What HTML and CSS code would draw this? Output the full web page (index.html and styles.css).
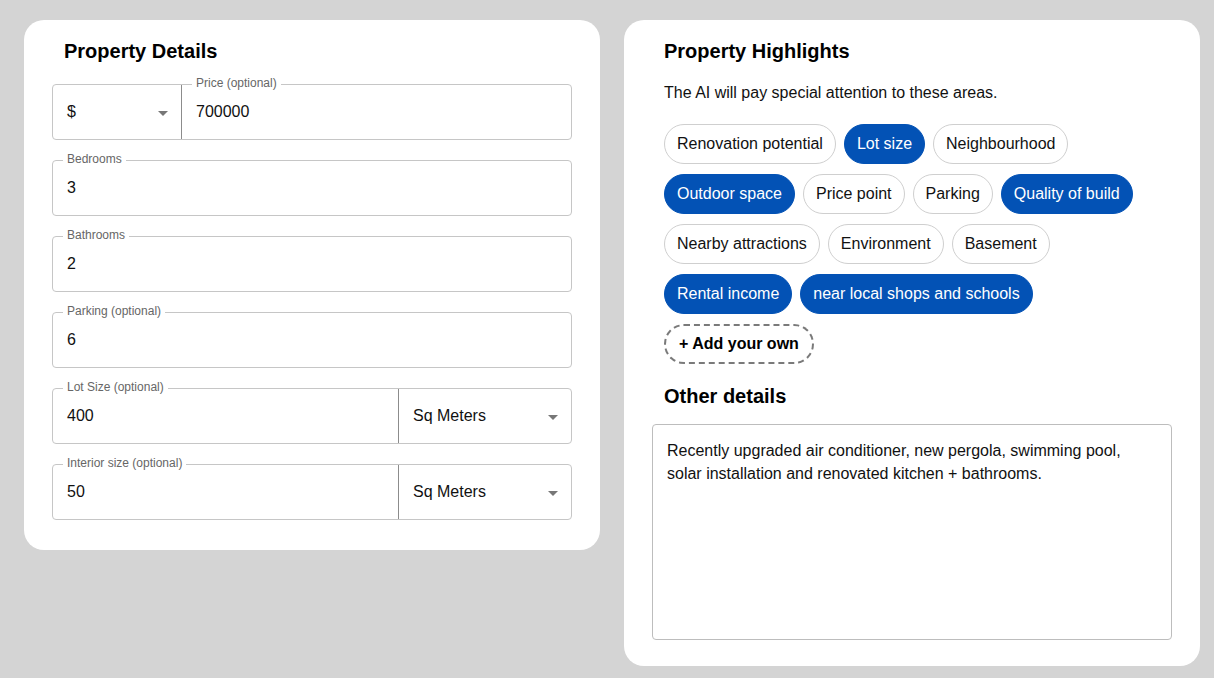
FILE: index.html
```html
<!DOCTYPE html>
<html>
<head>
  <title>Property Listing</title>
  <link rel="stylesheet" href="styles.css">
</head>
<body>
  <div class="card details-card">
    <h2 class="card-title">Property Details</h2>

    <div class="field">
      <div class="select-part currency">
        <span>$</span>
        <span class="arrow"></span>
      </div>
      <div class="input-part">
        <label class="float-label">Price (optional)</label>
        <span class="value">700000</span>
      </div>
    </div>

    <div class="field">
      <div class="input-part">
        <label class="float-label">Bedrooms</label>
        <span class="value">3</span>
      </div>
    </div>

    <div class="field">
      <div class="input-part">
        <label class="float-label">Bathrooms</label>
        <span class="value">2</span>
      </div>
    </div>

    <div class="field">
      <div class="input-part">
        <label class="float-label">Parking (optional)</label>
        <span class="value">6</span>
      </div>
    </div>

    <div class="field">
      <div class="input-part">
        <label class="float-label">Lot Size (optional)</label>
        <span class="value">400</span>
      </div>
      <div class="select-part unit">
        <span>Sq Meters</span>
        <span class="arrow"></span>
      </div>
    </div>

    <div class="field">
      <div class="input-part">
        <label class="float-label">Interior size (optional)</label>
        <span class="value">50</span>
      </div>
      <div class="select-part unit">
        <span>Sq Meters</span>
        <span class="arrow"></span>
      </div>
    </div>
  </div>

  <div class="card highlights-card">
    <h2 class="card-title">Property Highlights</h2>
    <p class="subtitle">The AI will pay special attention to these areas.</p>

    <div class="chips">
      <span class="chip">Renovation potential</span>
      <span class="chip selected">Lot size</span>
      <span class="chip">Neighbourhood</span>
      <span class="chip selected">Outdoor space</span>
      <span class="chip">Price point</span>
      <span class="chip">Parking</span>
      <span class="chip selected">Quality of build</span>
      <span class="chip">Nearby attractions</span>
      <span class="chip">Environment</span>
      <span class="chip">Basement</span>
      <span class="chip selected">Rental income</span>
      <span class="chip selected">near local shops and schools</span>
      <span class="chip add-chip">+ Add your own</span>
    </div>

    <h2 class="card-title section-title">Other details</h2>
    <textarea class="other-details">Recently upgraded air conditioner, new pergola, swimming pool, solar installation and renovated kitchen + bathrooms.</textarea>
  </div>
</body>
</html>
```

FILE: styles.css
```css
body {
  margin: 0;
  padding: 20px 14px 20px 24px;
  background-color: #d4d4d4;
  font-family: "Liberation Sans", Arial, sans-serif;
  color: #111;
  display: flex;
  align-items: flex-start;
  gap: 24px;
}
.card {
  flex-shrink: 0;
  width: 576px;
  box-sizing: border-box;
  background-color: white;
  border-radius: 20px;
}
.details-card {
  padding: 19px 28px 30px;
}
.highlights-card {
  padding: 19px 28px 26px;
}
.card-title {
  margin: 0 12px;
  font-size: 20px;
  line-height: 24px;
  font-weight: bold;
  color: #000;
}
.field {
  display: flex;
  height: 56px;
  box-sizing: border-box;
  border: 1px solid #c6c6c6;
  border-radius: 4px;
  margin-top: 20px;
}
.details-card .card-title + .field {
  margin-top: 21px;
}
.input-part {
  position: relative;
  flex: 1;
  display: flex;
  align-items: center;
  padding: 0 14px;
}
.float-label {
  position: absolute;
  top: -9px;
  left: 10px;
  padding: 0 4px;
  background-color: white;
  font-size: 12px;
  line-height: 14px;
  color: #666;
}
.value {
  font-size: 16px;
}
.select-part {
  display: flex;
  align-items: center;
  justify-content: space-between;
  box-sizing: border-box;
  padding: 0 13px 0 14px;
  font-size: 16px;
}
.currency {
  width: 129px;
  border-right: 1px solid #8c8c8c;
}
.unit {
  width: 173px;
  border-left: 1px solid #8c8c8c;
}
.arrow {
  width: 0;
  height: 0;
  border-left: 5px solid transparent;
  border-right: 5px solid transparent;
  border-top: 5px solid #777;
  margin-top: 2px;
}
.subtitle {
  margin: 20px 12px 0;
  font-size: 16px;
  line-height: 20px;
}
.chips {
  display: flex;
  flex-wrap: wrap;
  gap: 10px 8px;
  margin: 21px 12px 0;
}
.chip {
  display: inline-flex;
  align-items: center;
  height: 40px;
  box-sizing: border-box;
  padding: 0 12px;
  border: 1px solid #cfcfcf;
  border-radius: 20px;
  font-size: 16px;
  color: #111;
  background-color: white;
}
.chip.selected {
  background-color: #0352b5;
  border-color: #0352b5;
  color: white;
}
.add-chip {
  border: 2px dashed #7a7a7a;
  padding: 0 13px;
  font-weight: bold;
  color: #000;
}
.section-title {
  margin-top: 20px;
}
.other-details {
  display: block;
  width: 100%;
  height: 216px;
  box-sizing: border-box;
  margin-top: 16px;
  padding: 14px 14px;
  border: 1px solid #bdbdbd;
  border-radius: 4px;
  font-family: "Liberation Sans", Arial, sans-serif;
  font-size: 16px;
  line-height: 23px;
  color: #111;
  resize: none;
}
```
